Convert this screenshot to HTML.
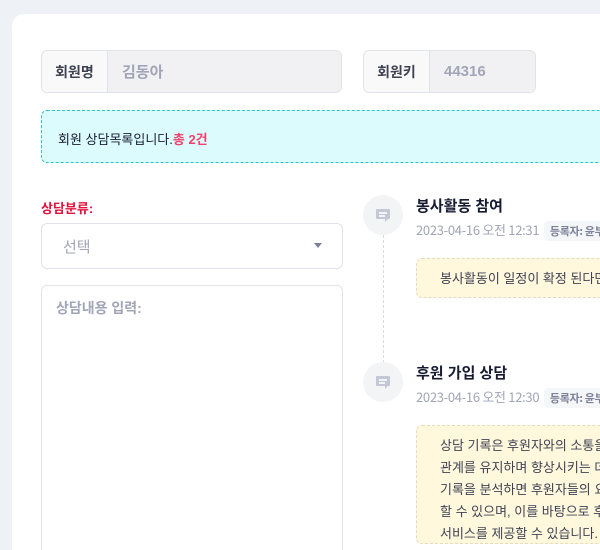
<!DOCTYPE html>
<html style="width:600px;height:550px;overflow:hidden"><head><meta charset="utf-8"><style>
*{box-sizing:border-box;margin:0;padding:0}
body{width:600px;height:550px;overflow:hidden;background:#eef1f5;font-family:"Liberation Sans","Noto Sans CJK KR",sans-serif;position:relative}
.card{position:absolute;left:12px;top:14px;width:588px;height:536px;background:#fff;border-radius:12px 0 0 0}
.a{position:absolute}
.grp{position:absolute;height:43px;border:1px solid #e1e3ea;border-radius:6px;background:#f5f5f5;display:flex;overflow:hidden}
.grp .l{background:#f9f9f9;border-right:1px solid #e1e3ea;font-weight:bold;color:#3f4254;font-size:14px;display:flex;align-items:center;justify-content:center}
.grp .v{background:#f1f1f3;color:#a1a5b7;font-size:15px;font-weight:bold;display:flex;align-items:center;padding-left:14px;flex:1}
.ic{position:absolute;left:363px;width:40px;height:40px;border-radius:50%;background:#f3f4f6}
.ic i{position:absolute;left:13px;top:14px;width:14px;height:10px;background:#c4c7d6;border-radius:1px}
.ic i:before,.ic i:after{content:"";position:absolute;left:3px;height:1.5px;background:#f3f4f6;width:8px}
.ic i:before{top:3px}.ic i:after{top:6px;width:6px}
.ic b{position:absolute;left:22px;top:24px;border-left:3px solid #c4c7d6;border-bottom:3px solid transparent}
.t{position:absolute;left:416px;font-size:15px;font-weight:bold;color:#181c32}
.d{position:absolute;left:416px;font-size:13px;color:#a1a5b7;white-space:nowrap;font-family:"Noto Sans CJK KR",sans-serif;letter-spacing:-0.3px}
.d span{background:#f5f6f8;color:#7e8299;font-size:11px;font-weight:bold;padding:2px 6px;border-radius:4px;margin-left:2px}
.y{position:absolute;left:416px;width:200px;background:#fff8dd;border:1px dashed #e4dcc0;border-radius:6px;font-size:13px;color:#3f4254;padding:9px 0 0 23px;line-height:22px;white-space:nowrap;overflow:hidden}
</style></head><body>
<div class="card"></div>
<div class="grp" style="left:41px;top:50px;width:301px"><div class="l" style="width:66px">회원명</div><div class="v">김동아</div></div>
<div class="grp" style="left:363px;top:50px;width:173px"><div class="l" style="width:66px">회원키</div><div class="v">44316</div></div>
<div class="a" style="left:41px;top:110px;width:580px;height:53px;background:#dcfbfd;border:1px dashed #2bc5c4;border-radius:6px;font-size:13px;color:#181c32;padding:18px 0 0 16px">회원 상담목록입니다.<b style="color:#f1416c">총 2건</b></div>
<div class="a" style="left:41px;top:198px;font-size:13px;font-weight:bold;color:#e0113c">상담분류:</div>
<div class="a" style="left:41px;top:223px;width:302px;height:46px;border:1px solid #e1e3ea;border-radius:6px;font-size:15px;color:#a1a5b7;padding:12px 0 0 21px">선택
<div class="a" style="left:272px;top:19px;border-left:4px solid transparent;border-right:4px solid transparent;border-top:5px solid #7e8299"></div></div>
<div class="a" style="left:41px;top:285px;width:302px;height:280px;border:1px solid #e1e3ea;border-radius:6px;font-size:14px;font-weight:bold;color:#a1a5b7;padding:12px 0 0 14px">상담내용 입력:</div>
<div class="a" style="left:383px;top:235px;height:128px;border-left:1px dashed #d8dae3"></div>
<div class="ic" style="top:195px"><i></i><b></b></div>
<div class="ic" style="top:362px"><i></i><b></b></div>
<div class="t" style="top:195px">봉사활동 참여</div>
<div class="d" style="top:220px">2023-04-16 오전 12:31 <span>등록자: 윤부</span></div>
<div class="y" style="top:258px;height:40px">봉사활동이 일정이 확정 된다면</div>
<div class="t" style="top:362px">후원 가입 상담</div>
<div class="d" style="top:387px">2023-04-16 오전 12:30 <span>등록자: 윤부</span></div>
<div class="y" style="top:425px;height:119px">상담 기록은 후원자와의 소통을<br>관계를 유지하며 향상시키는 데<br>기록을 분석하면 후원자들의 요<br>할 수 있으며, 이를 바탕으로 후<br>서비스를 제공할 수 있습니다.</div>
</body></html>
